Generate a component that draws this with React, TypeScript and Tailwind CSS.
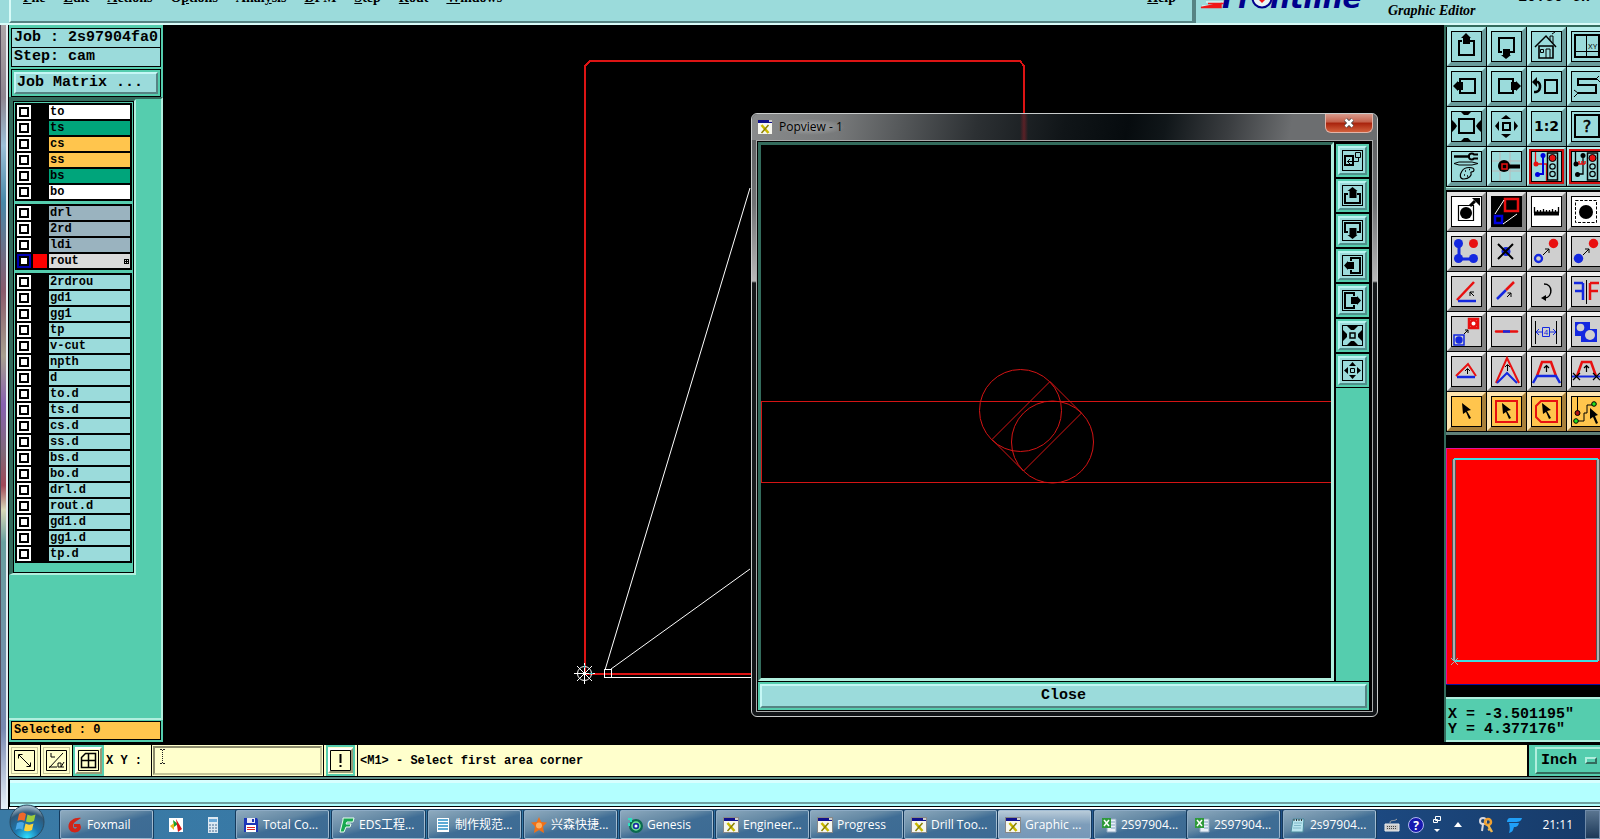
import React, { useState } from 'react';

type Layer = { name: string; bg: string; active?: boolean };

const layerGroups: Layer[][] = [
  [
    { name: 'to', bg: 'bg-white' },
    { name: 'ts', bg: 'bg-[#00a57b]' },
    { name: 'cs', bg: 'bg-[#ffc54d]' },
    { name: 'ss', bg: 'bg-[#ffc54d]' },
    { name: 'bs', bg: 'bg-[#00a57b]' },
    { name: 'bo', bg: 'bg-white' },
  ],
  [
    { name: 'drl', bg: 'bg-[#9ab3bf]' },
    { name: '2rd', bg: 'bg-[#9ab3bf]' },
    { name: 'ldi', bg: 'bg-[#9ab3bf]' },
    { name: 'rout', bg: 'bg-[#dadada]', active: true },
  ],
  [
    '2rdrou', 'gd1', 'gg1', 'tp', 'v-cut', 'npth', 'd', 'to.d', 'ts.d', 'cs.d', 'ss.d',
    'bs.d', 'bo.d', 'drl.d', 'rout.d', 'gd1.d', 'gg1.d', 'tp.d',
  ].map((name) => ({ name, bg: 'bg-[#9bdbdb]' })),
];

const menus = [
  ['', 'F', 'ile'],
  ['', 'E', 'dit'],
  ['', 'A', 'ctions'],
  ['O', 'p', 'tions'],
  ['Anal', 'y', 'sis'],
  ['', 'D', 'FM'],
  ['', 'S', 'tep'],
  ['', 'R', 'out'],
  ['', 'W', 'indows'],
];

const RED = '#e81010';
const BLUE = '#1428e0';

/* ---------- icons, all on a 31px box ---------- */

function Box({ children, fill = 'none' }: { children?: React.ReactNode; fill?: string }) {
  return (
    <svg viewBox="0 0 31 31" className="block size-[31px]" fill="none" stroke="#000" strokeWidth="2" aria-hidden="true">
      <rect x="0.5" y="0.5" width="30" height="30" fill={fill} strokeWidth="1" />
      {children}
    </svg>
  );
}

const icons: Record<string, React.ReactNode> = {
  panUp: <Box><path d="M11 10H8v14h15V10h-4" /><path d="M15 2l5 5h-1v6h-7V7h-2z" fill="#000" stroke="none" /></Box>,
  panDown: <Box><path d="M11 21H8V7h15v14h-4" /><path d="M15 28l5-4h-1v-6h-7v6h-2z" fill="#000" stroke="none" /></Box>,
  home: (
    <Box>
      <path d="M4 16L15 5l10 11" strokeWidth="1.5" /><path d="M8 15v12h14V15z" strokeWidth="1.6" />
      <path d="M9.5 18.500h3v3h-3zM15 27v-9h4v9M19 9V5h3v7M21 3l3-2" strokeWidth="1" />
    </Box>
  ),
  xy: (
    <Box>
      <path d="M4 4h24v22H4z" /><path d="M15.500 4v22M4 20.500h24" strokeWidth="1" />
      <text x="17" y="18" fontSize="7" fontFamily="Liberation Sans" fill="#000" stroke="none">XY</text>
    </Box>
  ),
  panLeft: <Box><path d="M9 11V8h15v14H9v-3" /><path d="M2 15l5-5v1h5v8H7v1z" fill="#000" stroke="none" /></Box>,
  panRight: <Box><path d="M22 11V8H8v14h14v-3" /><path d="M30 15l-5-5v1h-5v8h5v1z" fill="#000" stroke="none" /></Box>,
  undo: (
    <Box>
      <path d="M14 9h12v13H14z" /><path d="M4 11h3c3 2 3 9-2 10H3" strokeWidth="2.500" />
      <path d="M1 11l5-5v10z" fill="#000" stroke="none" />
    </Box>
  ),
  serpent: <Box><path d="M26 8H7v6h18v8H7" /><path d="M25 8l3-3M26 8l3 3M7 22l-4-3M7 22l-4 4" strokeWidth="1" /></Box>,
  zoomIn: (
    <Box>
      <path d="M8 8h15v14H8z" />
      <path d="M10 1h10l-3 3h-4zM10 30h10l-3-3h-4zM1 9l3 3 2 3-2 3-3 3zM30 9l-3 3-2 3 2 3 3 3z" fill="#000" stroke="none" />
    </Box>
  ),
  zoomOut: (
    <Box>
      <path d="M12 12h7v7h-7z" />
      <path d="M10 8h10l-5-4zM10 23h10l-5 4zM8 10v10l-4-5zM23 10v10l4-5z" fill="#000" stroke="none" />
    </Box>
  ),
  half: (
    <Box>
      <text x="15.500" y="20" textAnchor="middle" fontSize="14" fontWeight="700" fontFamily="DejaVu Sans" letterSpacing="0" fill="#000" stroke="none">1:2</text>
    </Box>
  ),
  help: (
    <Box>
      <path d="M4 4h24v22H4z" />
      <text x="16" y="21" textAnchor="middle" fontSize="16" fontFamily="DejaVu Sans" fill="#000" stroke="#000" strokeWidth="0.5">?</text>
    </Box>
  ),
  tools: (
    <Box>
      <path d="M3 5.500h16" strokeWidth="2.500" /><path d="M27 3.500h-4a3 3 0 1 0 0 4h4" />
      <path d="M3 12.500l5-1.500h13l6 1.500-6 1.500H8z" strokeWidth="1" />
      <path d="M11 20c3-5 12-4 12-1s-4 1-3 3-2 6-7 6-4-5-2-8z" strokeWidth="1.200" />
      <path d="M14 20h1M18 18.500h1M13 24h1M16 25h1" strokeWidth="1.500" />
    </Box>
  ),
  probe: (
    <Box>
      <path d="M9 1v29M19 1v29M1 10h29M1 20h29" stroke="#b9b9b9" strokeWidth="1" />
      <path d="M18 15.500h11" strokeWidth="4" />
      <circle cx="13" cy="15" r="6" fill="#000" stroke="none" />
      <path d="M11 13h5v5h-5z" stroke={RED} strokeWidth="1.500" />
    </Box>
  ),
  netColor: (
    <Box>
      <path d="M4.500 1v12h11v17" stroke={RED} strokeWidth="1.300" /><path d="M12 5v18H7" stroke="#0000e0" />
      <circle cx="5" cy="13" r="2.500" fill={RED} stroke="none" />
      <circle cx="12" cy="4.500" r="2.500" fill="#0000e0" stroke="none" /><circle cx="6.500" cy="23.500" r="2.500" fill="#0000e0" stroke="none" />
      <path d="M16.500 2h10v27h-10z" strokeWidth="1.500" />
      <circle cx="21.500" cy="7" r="3.500" fill={RED} strokeWidth="1" /><circle cx="21.500" cy="15.500" r="2.700" strokeWidth="1.200" /><circle cx="21.500" cy="23" r="2.700" strokeWidth="1.200" />
    </Box>
  ),
  netBlack: (
    <Box>
      <path d="M4.500 1v12M12 5v18H7" strokeWidth="1.300" /><path d="M6 13h8M8 10v3M11 10v3M14 10v3" stroke={RED} strokeWidth="1.500" />
      <circle cx="5" cy="13" r="2.500" fill="#000" stroke="none" />
      <circle cx="12" cy="4.500" r="2.500" fill="#000" stroke="none" /><circle cx="6.500" cy="23.500" r="2.500" fill="#000" stroke="none" />
      <path d="M16.500 2h10v27h-10z" strokeWidth="1.500" />
      <circle cx="21.500" cy="7" r="3.500" fill={RED} strokeWidth="1" /><circle cx="21.500" cy="15.500" r="2.700" strokeWidth="1.200" /><circle cx="21.500" cy="23" r="2.700" strokeWidth="1.200" />
    </Box>
  ),
  pad: (
    <Box fill="#fff">
      <path d="M7.500 9.500h15v15h-15z" strokeWidth="1.200" /><circle cx="15" cy="17" r="6" fill="#000" stroke="none" />
      <path d="M19 10l5-5" strokeWidth="3" /><path d="M21 2h8v8z" fill="#000" stroke="none" />
    </Box>
  ),
  window: (
    <Box fill="#000">
      <path d="M14 3h13v12H14z" stroke={RED} strokeWidth="2.500" /><path d="M4 20h7v7H4z" stroke="#0000e0" strokeWidth="2.500" />
      <path d="M4 18L13 4M12 28l14-10" stroke="#fff" strokeWidth="1" />
    </Box>
  ),
  ruler: <Box fill="#fff"><path d="M3 17.500h25" strokeWidth="4" /><path d="M3.500 11v6M6.500 14v3M9.500 14v3M12.500 13v4M15.500 14v3M18.500 14v3M21.500 13v4M24.500 14v3M27.500 11v6" strokeWidth="1.300" /></Box>,
  dotted: <Box fill="#fff"><path d="M4.500 4.500h21v22h-21z" strokeWidth="1" strokeDasharray="3 1.500" /><circle cx="15" cy="16" r="7" fill="#000" stroke="none" /></Box>,
  chain: (
    <Box>
      <path d="M8 8v15h15" stroke={BLUE} strokeWidth="3" />
      <g stroke="none"><circle cx="7.500" cy="7.500" r="4.500" fill={BLUE} /><circle cx="7.500" cy="22.500" r="4.500" fill={BLUE} /><circle cx="22.500" cy="22.500" r="4.500" fill={BLUE} /><circle cx="22.500" cy="7.500" r="4.500" fill={RED} /></g>
    </Box>
  ),
  erase: <Box><circle cx="15" cy="15.500" r="4.500" fill={BLUE} stroke="none" /><path d="M7 8l15 15M22 8L7 23" /></Box>,
  copy: <Box><circle cx="7.500" cy="22.500" r="3.500" stroke={BLUE} strokeWidth="2.300" /><circle cx="22.500" cy="7.500" r="4.700" fill={RED} stroke="none" /><path d="M12 19l6-6M14 13h4v4" strokeWidth="1" /></Box>,
  move: <Box><circle cx="7.500" cy="22.500" r="4.700" fill={BLUE} stroke="none" /><circle cx="22.500" cy="7.500" r="4.700" fill={RED} stroke="none" /><path d="M12 19l6-6M14 13h4v4" strokeWidth="1" /></Box>,
  angle: <Box><path d="M6 24L23 6" stroke={RED} strokeWidth="2.500" /><path d="M7 25h18" stroke={BLUE} strokeWidth="2.500" /><path d="M23 20l-4-4M19 20v-4h4" strokeWidth="1" /></Box>,
  slide: <Box><path d="M6 23l9-9" stroke={BLUE} strokeWidth="2.500" /><path d="M15 14l8-8" stroke={RED} strokeWidth="2.500" /><path d="M16 21l4-4M16.500 17H20v4" strokeWidth="1" /></Box>,
  rotate: <Box><path d="M13 8c9 0 9 13 1 14" strokeWidth="1.500" /><path d="M10 22l5-3v6z" fill="#000" stroke="none" /></Box>,
  mirror: (
    <Box>
      <path d="M12 7H3M12 7v17M12 15H4" stroke={BLUE} strokeWidth="2.500" /><path d="M15.500 4v24" strokeWidth="1" />
      <path d="M19 7h9M19 7v17M19 15h8" stroke={RED} strokeWidth="2.500" />
    </Box>
  ),
  swap: (
    <Box>
      <path d="M18 3h9v9h-9z" stroke={RED} strokeWidth="2.500" /><circle cx="22.500" cy="7.500" r="3" fill="#fff" stroke={RED} />
      <path d="M3 19h10v10H3z" stroke={BLUE} strokeWidth="1.500" /><circle cx="8" cy="24" r="3.700" fill={BLUE} stroke="none" />
      <path d="M13 18l4-4M14 14h3v3" strokeWidth="1" />
    </Box>
  ),
  join: <Box><path d="M5 15.500h21" stroke={RED} strokeWidth="2.500" strokeLinecap="round" /><path d="M12 15.500h7" stroke={BLUE} strokeWidth="2.500" /></Box>,
  spacing: (
    <Box>
      <path d="M4.500 5v23M25.500 5v23" strokeWidth="1" /><path d="M11.500 11.500h7v9h-7z" stroke={BLUE} strokeWidth="1" />
      <path d="M5 16h6M19 16h6M8 13l-3 3 3 3M22 13l3 3-3 3" stroke={BLUE} strokeWidth="1" />
      <text x="15" y="19" textAnchor="middle" fontSize="8" fontFamily="Liberation Sans" fill={BLUE} stroke="none">4</text>
    </Box>
  ),
  surface: (
    <Box>
      <path d="M4 6h15v7h7v13H10v-6H4z" fill={BLUE} stroke="none" />
      <circle cx="9.500" cy="11.500" r="3.800" fill="#cfcfcf" stroke="none" /><circle cx="19" cy="19" r="5" fill="#cfcfcf" stroke="none" />
    </Box>
  ),
  tri1: <Box><path d="M5 20L17 8l8 12" stroke={RED} /><path d="M6 21h18" stroke={BLUE} strokeWidth="2.500" /><path d="M16.500 18v-5M14 15l2.500-2.500L19 15" strokeWidth="1" /></Box>,
  tri2: <Box><path d="M5 27L16 2l12 25" stroke={RED} /><path d="M6 27l10-10 10 10" stroke={BLUE} /><path d="M16.500 15V9M14 11l2.500-2.500L19 11" strokeWidth="1" /></Box>,
  tri3: <Box><path d="M6 20l5-14h9l5 14" stroke={RED} strokeWidth="2.500" /><path d="M2 27l4-7h19l4 7" stroke={BLUE} strokeWidth="2.500" /><path d="M15.500 16v-6M13 12l2.500-2.500L18 12" strokeWidth="1.200" /></Box>,
  tri4: <Box><path d="M6 20l5-14h9l5 14" stroke={RED} strokeWidth="2.500" /><path d="M1 20.500h29" stroke={BLUE} /><path d="M2 17l7 7M9 17l-7 7M22 17l7 7M29 17l-7 7M15.500 16v-6M13 12l2.500-2.500L18 12" strokeWidth="1.200" /></Box>,
  arrow: <Box><path d="M11 7l9 7-4 1 4 7-2 1-3-7-3 2z" fill="#000" stroke="none" /></Box>,
  arrowRect: <Box><path d="M5 5h21v21H5z" stroke={RED} /><path d="M11 7l9 7-4 1 4 7-2 1-3-7-3 2z" fill="#000" stroke="none" /></Box>,
  arrowPoly: <Box><path d="M10 5h16v21H10l-5-5V10z" stroke={RED} /><path d="M11 7l9 7-4 1 4 7-2 1-3-7-3 2z" fill="#000" stroke="none" /></Box>,
  arrowNet: (
    <Box>
      <path d="M6.500 1v15M6 25h7v-8h3V9h7" strokeWidth="1" />
      <circle cx="6.500" cy="17" r="2.500" fill="#b01010" strokeWidth="1" /><circle cx="5" cy="25" r="2.300" fill="#20e020" strokeWidth="1" /><circle cx="23" cy="8" r="2.300" fill="#20e020" strokeWidth="1" />
      <path d="M19 12l8 7-3 1 3 7-2 1-3-7-3 2z" fill="#000" stroke="none" />
    </Box>
  ),
};

const bevel = {
  aqua: 'bg-[#9bdbdb] border-t-[#b8efed] border-l-[#b8efed] border-r-[#6a9c9c] border-b-[#6a9c9c]',
  white: 'bg-white border-t-[#e2e2e2] border-l-[#e2e2e2] border-r-[#858585] border-b-[#858585]',
  gray: 'bg-[#cfcfcf] border-t-[#efefef] border-l-[#efefef] border-r-[#858585] border-b-[#858585]',
  orange: 'bg-[#ffc54d] border-t-[#ffe5b0] border-l-[#ffe5b0] border-r-[#a8803a] border-b-[#a8803a]',
};

type Tone = keyof typeof bevel;

const viewTools = [
  'panUp', 'panDown', 'home', 'xy', 'panLeft', 'panRight', 'undo', 'serpent',
  'zoomIn', 'zoomOut', 'half', 'help', 'tools', 'probe', 'netColor', 'netBlack',
];

const editTools: [string, Tone][] = [
  ['pad', 'white'], ['window', 'white'], ['ruler', 'white'], ['dotted', 'white'],
  ['chain', 'gray'], ['erase', 'gray'], ['copy', 'gray'], ['move', 'gray'],
  ['angle', 'gray'], ['slide', 'gray'], ['rotate', 'gray'], ['mirror', 'gray'],
  ['swap', 'gray'], ['join', 'gray'], ['spacing', 'gray'], ['surface', 'gray'],
  ['tri1', 'gray'], ['tri2', 'gray'], ['tri3', 'gray'], ['tri4', 'gray'],
  ['arrow', 'orange'], ['arrowRect', 'orange'], ['arrowPoly', 'orange'], ['arrowNet', 'orange'],
];

function ToolButton({ icon, tone = 'aqua' }: { icon: string; tone?: Tone }) {
  const alert = icon.startsWith('net');
  return (
    <button type="button" aria-label={icon} className={`flex size-[39px] items-center justify-center border-4 ${bevel[tone]}`}>
      <span className={alert ? 'outline-2 outline-[#d01010]' : ''}>{icons[icon]}</span>
    </button>
  );
}

/* ---------- popview icons, 21px box ---------- */

const popIcons: [string, React.ReactNode][] = [
  ['Zoom area', <g key="a"><path d="M3 6h8v9H3z" strokeWidth="2" /><path d="M13.500 2.500h5v5h-5zM16.500 7v4.500H5M8 9l-2.500 2.500L8 14" /></g>],
  ['Pan up', <g key="b"><path d="M6 9H3v9h15V9h-3" strokeWidth="2" /><path d="M10.500 2l5 4h-1v7h-7V6h-2z" fill="#000" stroke="none" /></g>],
  ['Pan down', <g key="c"><path d="M6 12H3V3h15v9h-3" strokeWidth="2" /><path d="M10.500 19l5-4h-1V8h-7v7h-2z" fill="#000" stroke="none" /></g>],
  ['Pan left', <g key="d"><path d="M9 6V3h9v15H9v-3" strokeWidth="2" /><path d="M2 10.500l4-4.500v1h6v7H6v1z" fill="#000" stroke="none" /></g>],
  ['Pan right', <g key="e"><path d="M12 6V3H3v15h9v-3" strokeWidth="2" /><path d="M19 10.500L15 6v1H9v7h6v1z" fill="#000" stroke="none" /></g>],
  ['Zoom in', <g key="f"><path d="M8 8h5v5H8z" strokeWidth="1.500" /><path d="M5 1h11l-4 4H9zM5 20h11l-4-4H9zM1 5l4 4v3l-4 4zM20 5l-4 4v3l4 4z" fill="#000" stroke="none" /></g>],
  ['Zoom out', <g key="g"><path d="M8.500 8.500h4v4h-4z" /><path d="M7 6h7l-3.500-4zM7 15h7l-3.500 4zM6 7v7l-4-3.500zM15 7v7l4-3.500z" fill="#000" stroke="none" /></g>],
];

function XIcon() {
  return (
    <svg viewBox="0 0 16 16" className="size-4 shrink-0" aria-hidden="true">
      <rect x="0.5" y="0.5" width="15" height="15" fill="#f6f6ee" stroke="#888" />
      <rect x="1" y="1" width="14" height="3" fill="#10108c" />
      <path d="M12 1h3v2h-3z" fill="#ccc" />
      <path d="M4.500 6l7 8" stroke="#c9b800" strokeWidth="2.500" />
      <path d="M11.500 6l-7 8" stroke="#8a8000" strokeWidth="1.500" />
    </svg>
  );
}

function Popview() {
  return (
    <section className="absolute top-[113px] left-[751px] flex h-[604px] w-[627px] flex-col rounded-md border border-[#c9cccc] bg-[linear-gradient(180deg,#5a5c5e_0px,#707274_90px,#b8b8b8_167px,#15181a_169px,#111417_100%)] px-1 pb-1">
      <header className="relative -mx-1 flex h-[26px] items-start justify-between rounded-t-md bg-[linear-gradient(100deg,#8a8c8d_0%,#77797a_14%,#55585a_24%,#2c3033_36%,#101518_50%,#060b0e_60%,#101619_66%,#3a3d40_76%,#6c6e70_86%,#6c6e70_100%)] pl-[5px]">
        <span className="absolute top-0 left-[268px] h-full w-2 bg-[linear-gradient(90deg,transparent,#8c202890,transparent)]" />
        <div className="flex h-full items-center gap-1 font-['Open_Sans',sans-serif] text-xs text-black">
          <XIcon />
          <h2 className="bg-[radial-gradient(closest-side,#a8aaab,transparent)] px-0.5">Popview - 1</h2>
        </div>
        <button type="button" aria-label="Close window" className="mr-1 flex h-[19px] w-12 items-center justify-center rounded-b-md border border-t-0 border-[#e3b4a8] bg-[linear-gradient(180deg,#d89a8c_0%,#c4604a_45%,#a8220c_50%,#d2603c_100%)]">
          <svg viewBox="0 0 12 12" className="size-3" aria-hidden="true">
            <path d="M2.500 2.500l7 7M9.500 2.500l-7 7" stroke="#444" strokeWidth="4" /><path d="M2.500 2.500l7 7M9.500 2.500l-7 7" stroke="#fff" strokeWidth="2.500" />
          </svg>
        </button>
      </header>
      <div className="flex min-h-0 flex-1 flex-col border border-[#a9acac] bg-black py-px pr-[3px] pl-px">
        <div className="flex min-h-0 flex-1 gap-0.5">
          <div className="min-w-0 flex-1 overflow-hidden border-3 border-t-[#336b5c] border-r-[#b0efde] border-b-[#b0efde] border-l-[#336b5c]">
            <svg width="570" height="533" viewBox="761 145 570 533" fill="none" stroke="#d41414" shapeRendering="crispEdges" aria-label="Popview drawing">
              <path d="M1335 401.500H761.500v81H1335" />
              <g shapeRendering="auto">
                <circle cx="1020.500" cy="410.500" r="41" /><circle cx="1052.500" cy="442" r="41" />
                <path d="M1050 381.500L992 439.500M1081.500 413L1023.500 471M1050 381.500l31.500 31.500M992 439.500l31.500 31.500" />
              </g>
            </svg>
          </div>
          <div className="w-[33px] bg-[#55cdae]">
            <div className="flex flex-col bg-black pt-px">
              {popIcons.map(([label, icon]) => (
                <button key={label} type="button" aria-label={label} className="mt-px mb-px flex h-[33px] items-center justify-center bg-[#55cdae]">
                  <span className="border-2 border-t-[#b8f4f0] border-r-[#4f8f8a] border-b-[#4f8f8a] border-l-[#b8f4f0] bg-[#9bdbdb] p-0.5">
                    <svg viewBox="0 0 21 21" className="size-[21px]" fill="none" stroke="#000" strokeWidth="1">
                      <rect x="0.5" y="0.5" width="20" height="20" />
                      {icon}
                    </svg>
                  </span>
                </button>
              ))}
            </div>
          </div>
        </div>
        <button type="button" className="mt-px h-7 border-2 border-[#55cdae] bg-[#9bdbdb] font-['Liberation_Mono',monospace] text-[15px] leading-5 font-semibold text-black">
          <span className="flex h-6 items-center justify-center border-2 border-t-[#c5f7f5] border-r-[#568383] border-b-[#568383] border-l-[#c5f7f5]">Close</span>
        </button>
      </div>
    </section>
  );
}

function MenuBar() {
  return (
    <header className="flex h-[25px] shrink-0 overflow-hidden border-b-2 border-[#d8fbf8] bg-[#9bdbdb] pl-[9px] text-black">
      <nav className="flex min-w-0 flex-1 border-r-2 border-b-2 border-l-2 border-[#568383] border-l-[#d8fbf8] pr-4 pl-3 font-['Liberation_Serif',serif] text-sm leading-4 font-bold">
        <div className="-mt-2.5 flex flex-1 gap-[18px]">
          {menus.map(([before, key, after]) => (
            <a key={before + key + after} href="#menu">
              {before}<u>{key}</u>{after}
            </a>
          ))}
          <a href="#help" className="ml-auto"><u>H</u>elp</a>
        </div>
      </nav>
      <div className="flex w-[406px] border-l-2 border-[#568383]">
        <svg viewBox="0 0 170 23" className="h-[23px] w-[170px]" aria-label="Frontline">
          <path d="M10 2h18M6 6h20" stroke="#fff" strokeWidth="1" />
          <path d="M12 3.500h18M5 7.500l20-4v4z" stroke="#f01818" fill="#f01818" strokeWidth="1.500" />
          <g fontFamily="DejaVu Sans" fontWeight="700" fontStyle="oblique" fontSize="28" fill="#00008c">
            <text x="26" y="8">Fr</text>
            <text x="74" y="8">ntline</text>
          </g>
          <circle cx="66" cy="-2" r="9.500" fill="#e8f4f4" stroke="#00008c" strokeWidth="2" />
          <path d="M61 -2h10l-5 5z" fill="#f01818" />
        </svg>
        <p className="mt-[3px] pl-[22px] font-['Liberation_Serif',serif] text-sm leading-4 font-bold whitespace-nowrap italic">Graphic Editor</p>
        <p className="-mt-2.5 ml-auto pr-2.5 font-['Liberation_Mono',monospace] text-[15px] leading-4 font-bold">10:50 GH</p>
      </div>
    </header>
  );
}

function Sidebar() {
  const [selected] = useState(0);
  return (
    <aside className="mb-[3px] ml-2 flex w-[155px] shrink-0 flex-col border-l border-black bg-[#55cdae] text-black">
      <div className="px-0.5 pt-[3px] font-['Liberation_Mono',monospace] text-[15px] leading-[18px] font-semibold whitespace-nowrap">
        <div className="overflow-hidden border border-black bg-[#9bdbdb] pl-0.5">Job : 2s97904fa0</div>
        <div className="border border-t-0 border-black bg-[#9bdbdb] pl-0.5">Step: cam</div>
        <div className="mt-0.5 border border-black p-0.5">
          <button type="button" className="block w-full border-2 border-t-[#c5f7f5] border-r-[#568383] border-b-[#568383] border-l-[#c5f7f5] bg-[#9bdbdb] pl-px text-left">Job Matrix ...</button>
        </div>
      </div>
      <div className="flex min-h-0 flex-1 items-start border-t-2 border-r-2 border-b-2 border-t-[#336b5c] border-r-[#b0efde] border-b-[#b0efde]">
        <div className="w-[127px] border-t-2 border-r-2 border-b-2 border-l-4 border-t-[#336b5c] border-r-[#b0efde] border-b-[#b0efde] border-l-[#336b5c]">
          <div className="flex flex-col gap-[3px] border border-black px-px pt-px pb-[9px]">
            {layerGroups.map((group, i) => (
              <div key={i} className="bg-black p-px">
                {group.map((l) => (
                  <label key={l.name} className="flex h-4 items-center gap-0.5 px-px font-['Liberation_Mono',monospace] text-xs leading-[14px] font-bold">
                    <input
                      type="checkbox"
                      defaultChecked={l.active}
                      className="size-[14px] shrink-0 appearance-none border-2 border-white bg-white shadow-[inset_0_0_0_2px_black] checked:border-[#0000b4]"
                    />
                    <span className={`size-[14px] shrink-0 ${l.active ? 'bg-[#ff0000]' : 'bg-black'}`} />
                    <span className={`flex h-[14px] min-w-0 flex-1 items-center justify-between pl-px ${l.bg}`}>
                      {l.name}
                      {l.active && (
                        <svg viewBox="0 0 5 5" className="mr-px size-[5px]" shapeRendering="crispEdges" aria-hidden="true">
                          <path d="M.5.5h4v4h-4zM2.500.5v4M.5 2.500h4" fill="none" stroke="#000" />
                        </svg>
                      )}
                    </span>
                  </label>
                ))}
              </div>
            ))}
          </div>
        </div>
      </div>
      <div className="px-0.5 pt-px pb-0.5">
        <p className="border border-black bg-[#ffc54d] pl-0.5 font-['Liberation_Mono',monospace] text-xs leading-[17px] font-bold">Selected : {selected}</p>
      </div>
    </aside>
  );
}

function Workspace() {
  return (
    <main className="min-w-0 flex-1 overflow-hidden bg-black">
      <svg width="1281" height="720" viewBox="163 25 1281 720" fill="none" aria-label="Board drawing">
        <path d="M585 674V66l5-5h430l4 5v608z" stroke="#dc1414" strokeWidth="2" shapeRendering="crispEdges" />
        <path d="M750 188L605 670M750 569L611 669" stroke="#fff" />
        <path d="M604.500 669.500h7v8h-7zM612 677.500h140" stroke="#fff" shapeRendering="crispEdges" />
        <path d="M584.500 663v21M574 673.500h21M577 666l15 15M592 666l-15 15" stroke="#fff" />
        <circle cx="584.500" cy="673.500" r="7" stroke="#fff" />
        <path d="M589 673.500h4M584.500 665v3" stroke="#40d0d0" />
      </svg>
    </main>
  );
}

function RightPanel() {
  return (
    <aside className="mb-[3px] flex w-[156px] shrink-0 flex-col overflow-hidden border-l-2 border-[#336b5c] bg-black">
      <div className="grid grid-cols-[repeat(4,39px)] gap-px border-t-2 border-[#336b5c] pl-px">
        {viewTools.map((icon) => <ToolButton key={icon} icon={icon} />)}
      </div>
      <div className="mt-px mb-0.5 h-[3px] border-t border-[#b0efde] bg-[#6fa79f]" />
      <div className="grid grid-cols-[repeat(4,39px)] gap-px pl-px">
        {editTools.map(([icon, tone]) => <ToolButton key={icon} icon={icon} tone={tone} />)}
      </div>
      <div className="mt-px h-[3px] bg-[#5f8078]" />
      <div className="flex flex-1 flex-col justify-center">
        <svg width="160" height="237" viewBox="1446 448 160 237" className="shrink-0" fill="none" shapeRendering="crispEdges" aria-label="Overview">
          <path d="M1446 448h160v237h-160z" fill="#ff0000" />
          <path d="M1446.500 684V448.500H1606" stroke="#e010a0" />
          <path d="M1446 684.500h160" stroke="#1010a0" />
          <path d="M1454 459v202M1598 459v202" stroke="#555" strokeWidth="4" />
          <path d="M1454 459v202M1598 459v202" stroke="#b0b0b0" strokeWidth="2" />
          <path d="M1454 459h144M1454 661h144" stroke="#40dce0" strokeWidth="2" />
          <path d="M1451 658l7 7M1458 658l-7 7" stroke="#b0b0b0" />
        </svg>
      </div>
      <div className="h-[45px] border-t-2 border-b-2 border-[#b0efde] bg-[#55cdae] pt-2 pl-0.5 font-['Liberation_Mono',monospace] text-[15px] leading-[15px] font-semibold whitespace-pre text-black">
        <p>X = -3.501195&quot;</p>
        <p>Y = 4.377176&quot;</p>
      </div>
    </aside>
  );
}

function PromptBar() {
  return (
    <div className="ml-[9px] flex h-8 shrink-0 border-b border-black bg-[#ffffcc] font-['Liberation_Mono',monospace] text-xs font-bold text-black">
      <button type="button" aria-label="Snap line" className="flex w-8 items-center justify-center border-r border-black">
        <span className="border border-[#c5c59a] p-0.5">
          <svg viewBox="0 0 21 21" className="size-[21px]" fill="none" stroke="#000"><path d="M.5.5h20v20H.5zM5 5l11 11M4.500 8.500v-4h4M16.500 12.500v4h-4" /></svg>
        </span>
      </button>
      <button type="button" aria-label="Snap angle" className="flex w-8 items-center justify-center border-r border-black">
        <span className="border border-[#c5c59a] p-0.5">
          <svg viewBox="0 0 21 21" className="size-[21px]" fill="none" stroke="#000"><path d="M.5.5h20v20H.5zM3 18L17 3M3 17h8M5 3v4h4M12 13h3v4h-3zM18 12l-3 5h3" /></svg>
        </span>
      </button>
      <button type="button" aria-label="Grid" className="flex w-[30px] items-center justify-center border-2 border-[#55cdae]">
        <span className="border-2 border-t-white border-r-[#9a9a78] border-b-[#9a9a78] border-l-white p-px">
          <svg viewBox="0 0 21 21" className="size-[21px]" fill="none" stroke="#000"><path d="M.5.5h20v20H.5z" /><path d="M3.500 17.500v-10l4-4h10v14zM10.500 3v14M3 10.500h14" strokeWidth="1.500" /></svg>
        </span>
      </button>
      <label htmlFor="xy" className="flex w-12 items-center border-l border-[#55cdae] pl-0.5 whitespace-pre">X Y :</label>
      <div className="relative flex w-[173px] border-x border-black p-px">
        <input id="xy" className="w-full border-2 border-t-[#8c8c6c] border-r-[#c5c59a] border-b-[#c5c59a] border-l-[#8c8c6c] bg-[#ffffcc] px-1 outline-none" />
        <svg viewBox="0 0 5 15" className="pointer-events-none absolute top-1 left-2 h-[15px] w-[5px]" fill="none" stroke="#222" shapeRendering="crispEdges" aria-hidden="true">
          <path d="M0 .5h2M3 .5h2M0 14.500h2M3 14.500h2" /><path d="M2.500 1v13" strokeDasharray="1 1" />
        </svg>
      </div>
      <button type="button" aria-label="Apply" className="mx-0.5 flex w-[29px] items-center justify-center border-2 border-[#55cdae]">
        <span className="border-2 border-t-white border-r-[#9a9a78] border-b-[#9a9a78] border-l-white">
          <svg viewBox="0 0 21 21" className="size-[21px]" fill="none" stroke="#000"><path d="M.5.5h20v20H.5z" /><path d="M10.500 4v9M10.500 15v2" strokeWidth="2" /></svg>
        </span>
      </button>
      <p className="flex flex-1 items-center border-l border-black pl-0.5">&lt;M1&gt; - Select first area corner</p>
      <label className="relative flex w-[73px] items-center border-l-2 border-black bg-[#55cdae] py-0.5 pl-1.5">
        <span className="sr-only">Units</span>
        <select className="h-full w-full appearance-none border-y-2 border-l-2 border-y-[#b0efde] border-b-[#336b5c] border-l-[#b0efde] bg-[#55cdae] pl-1 text-[15px] font-semibold outline-none">
          <option>Inch</option>
          <option>mm</option>
        </select>
        <span className="pointer-events-none absolute right-[3px] h-[7px] w-3 border-2 border-t-[#b0efde] border-r-[#336b5c] border-b-[#336b5c] border-l-[#b0efde]" />
      </label>
    </div>
  );
}

/* ---------- windows taskbar ---------- */

const foxmail = <svg viewBox="0 0 16 16" className="size-4"><path d="M14 1C8 0 1 4 1.500 10c.5 7 12 7.500 12.500 0L13 7H7v3h3c-1 3-4 2-4-1 0-4 4-5 8-8z" fill="#d22418" /></svg>;
const floppy = <svg viewBox="0 0 16 16" className="size-4"><path d="M1 1h13l1 2v12H1z" fill="#1c35b8" /><path d="M4 1h8v5H4z" fill="#e8e8f4" /><path d="M9 2h2v3H9z" fill="#1c35b8" /><path d="M3 8h10v7H3z" fill="#fff" /><path d="M4 10.500h8M4 12.500h8" stroke="#d22" /></svg>;
const eds = <svg viewBox="0 0 16 16" className="size-4"><path d="M4 1h11l-1 4H8l-1 2h5l-1 3H7l-2 5H1l3-12z" fill="#18a850" stroke="#e8fff0" strokeWidth="1" /></svg>;
const sheet = <svg viewBox="0 0 16 16" className="size-4"><path d="M2 1h12v14H2z" fill="#fff" /><path d="M3 3h10M3 6h10M3 9h10M3 12h10" stroke="#2a90c8" strokeWidth="1.500" /></svg>;
const star = <svg viewBox="0 0 16 16" className="size-4"><path d="M8 0l2.300 5 5.700.6-4 4 1 6.400-5-3-5 3 1-6.400-4-4L5.700 5z" fill="#f07018" /><circle cx="8" cy="8.500" r="3" fill="#ffb060" /></svg>;
const genesis = <svg viewBox="0 0 16 16" className="size-4"><circle cx="9" cy="9" r="7" fill="#0a6a50" /><circle cx="9" cy="9" r="4" fill="#1830a0" stroke="#70e890" strokeWidth="1.500" /><circle cx="9" cy="9" r="1.500" fill="#fff" /><path d="M1 2h3v3M2 6v3" stroke="#30e0c0" strokeWidth="2" fill="none" /></svg>;
const excel = <svg viewBox="0 0 16 16" className="size-4"><path d="M6 2h9v13H6z" fill="#e8f0f8" stroke="#90a8c0" /><path d="M10 5h4M10 8h4M10 11h4" stroke="#7fa0c0" /><path d="M1 1h9v10H1z" fill="#2f9a3a" /><path d="M3 3l5 6M8 3L3 9" stroke="#fff" strokeWidth="1.500" /></svg>;
const notepad = <svg viewBox="0 0 16 16" className="size-4"><path d="M3 2h11l-1 13H1z" fill="#b8e4ee" stroke="#4a8a9c" /><path d="M4 2v2M6.500 2v2M9 2v2M11.500 2v2" stroke="#333" /><path d="M4 6h8M4 8.500h7M3 11h8" stroke="#80b8c8" /></svg>;

function Task({ icon, label, active }: { icon: React.ReactNode; label: string; active?: boolean }) {
  return (
    <button
      type="button"
      className={`flex h-[29px] w-[93px] items-center gap-1 overflow-hidden rounded-xs border border-[#c2d6e699] pl-1.5 whitespace-nowrap shadow-[0_0_0_1px_#153a5c] ${
        active ? 'bg-[linear-gradient(180deg,#b8cbd9,#7d9dba_50%,#7698b8)]' : 'bg-[linear-gradient(165deg,#8eaabe_0%,#6388a4_40%,#3f6d95_55%,#3c6b94_100%)]'
      }`}
    >
      <span className="shrink-0">{icon}</span>
      <span>{label}</span>
    </button>
  );
}

function Taskbar() {
  return (
    <footer className="flex h-[30px] shrink-0 items-center border-t border-[#203f58] bg-[linear-gradient(90deg,#3a7aa5_0%,#3678a6_35%,#2c629a_60%,#1d4a82_85%,#163a68_100%)] pl-[9px] font-['Open_Sans','Noto_Sans_CJK_SC',sans-serif] text-xs text-white">
      <button type="button" aria-label="Start" className="z-10 -mt-1.5 mr-[15px] shrink-0">
        <svg viewBox="0 0 36 36" className="size-9">
          <defs>
            <radialGradient id="orb" cx="50%" cy="95%" r="90%"><stop offset="0" stopColor="#30e0ff" /><stop offset="0.4" stopColor="#1c78b0" /><stop offset="0.8" stopColor="#305878" /><stop offset="1" stopColor="#a0b8c8" /></radialGradient>
          </defs>
          <circle cx="18" cy="18" r="17" fill="url(#orb)" stroke="#2a4a60" />
          <path d="M10 10c3-2 5-2 7 0l-1.500 7c-2-1.500-5-1.500-7 0z" fill="#f0682a" /><path d="M18.500 10.500c2 1.500 5 1.500 8 0L25 17c-3 1.500-6 1.500-8 .5z" fill="#9ccc3c" />
          <path d="M8 19c3-1.500 5-1.500 7 0l-1.500 7c-2-2-4-1.500-7 0z" fill="#4aa8e8" /><path d="M16.500 19.500c2 1.500 5 1.500 8 0L23 26c-3 1.500-6 1.500-8 .5z" fill="#fcd23c" />
        </svg>
      </button>
      <Task icon={foxmail} label="Foxmail" />
      <div className="flex w-[83px] items-center justify-around px-1">
        <svg viewBox="0 0 16 16" className="size-4"><path d="M1 1h14v14H1z" fill="#fff" /><path d="M5 3l5 4-4 3z" fill="#18a030" /><path d="M8 2l6 10-4 3z" fill="#d81818" /><path d="M2 9l4-3v7z" fill="#e8b820" /></svg>
        <svg viewBox="0 0 16 16" className="size-4"><path d="M3 0h10v16H3z" fill="#dce8f2" /><path d="M4 2h8v3H4z" fill="#68a8d8" /><path d="M5 7v8M8 7v8M11 7v8" stroke="#8fa8c0" strokeWidth="2" strokeDasharray="2 1" /></svg>
      </div>
      <div className="flex gap-[3px]">
        <Task icon={floppy} label="Total Co..." />
        <Task icon={eds} label="EDS工程..." />
        <Task icon={sheet} label="制作规范..." />
        <Task icon={star} label="兴森快捷..." />
        <Task icon={genesis} label="Genesis" />
        <div className="flex gap-px">
          <Task icon={<XIcon />} label="Engineer..." />
          <Task icon={<XIcon />} label="Progress" />
          <Task icon={<XIcon />} label="Drill Too..." />
          <Task icon={<XIcon />} label="Graphic ..." active />
        </div>
        <div className="flex">
          <Task icon={excel} label="2S97904..." />
          <Task icon={excel} label="2S97904..." />
        </div>
        <Task icon={notepad} label="2s97904..." />
      </div>
      <div className="ml-auto flex h-full items-center gap-3">
        <svg viewBox="0 0 16 16" className="size-4" fill="none"><path d="M1 7h14v7H1z" fill="#c8c8c8" stroke="#eee" /><path d="M3 9.500h10M3 11.500h10" stroke="#444" strokeDasharray="1 1" /><path d="M6 6c0-4 4-1 7-4" stroke="#aaa" /></svg>
        <svg viewBox="0 0 16 16" className="-mx-1 size-4"><circle cx="8" cy="8" r="7.500" fill="#1818b0" stroke="#b0b8f0" /><text x="8" y="12.500" textAnchor="middle" fontSize="12" fontWeight="700" fill="#fff">?</text></svg>
        <svg viewBox="0 0 10 20" className="h-5 w-2.5" fill="none" stroke="#fff"><path d="M3.500 1.500h5v4h-5zM1.500 4.500h4v3h-4z" /><path d="M2 14h6l-3 3z" fill="#fff" stroke="none" /></svg>
        <svg viewBox="0 0 8 5" className="h-[5px] w-2"><path d="M0 5l4-5 4 5z" fill="#fff" /></svg>
        <svg viewBox="0 0 16 16" className="ml-1 size-4" fill="none"><circle cx="5" cy="4" r="3" stroke="#d8d8e0" strokeWidth="2" /><path d="M5 7l-1 7" stroke="#d8d8e0" strokeWidth="2" /><circle cx="10" cy="5" r="3" stroke="#f0a030" strokeWidth="2.500" /><path d="M10 8l4 7M12 12l-2 1" stroke="#f0b850" strokeWidth="2.500" /></svg>
        <svg viewBox="0 0 16 16" className="size-4"><path d="M4 1h12c-1 4-4 4-8 4H1c0-2 1-4 3-4zM3 6h10c-1 4-3 4-5 4-1 3-1 5-5 6 1-3 1-6 0-10z" fill="#20a0f8" /></svg>
        <time className="pl-2">21:11</time>
        <button type="button" aria-label="Show desktop" className="h-full w-[15px] border border-[#6f8aa8] bg-[linear-gradient(180deg,#5a7590,#1c3858)]" />
      </div>
    </footer>
  );
}

export default function App() {
  return (
    <div className="relative flex h-screen w-full flex-col overflow-hidden bg-black">
      <div className="flex min-h-0 flex-1 flex-col bg-[linear-gradient(90deg,#554c5c_0px,#554c5c_1px,transparent_1px,transparent_6px,#e8eef4_6px,#e8eef4_8px,#000_8px),linear-gradient(180deg,#b8b0b0_0%,#8e8590_12%,#9cc0d8_18%,#4888a8_25%,#8a5a6c_36%,#a8a090_44%,#8860b0_50%,#806878_56%,#a04858_60%,#d8d8b8_63%,#68a0a0_67%,#7888b0_90%,#e8f0f8_100%)]">
        <MenuBar />
        <div className="flex min-h-0 flex-1">
          <Sidebar />
          <Workspace />
          <RightPanel />
        </div>
        <PromptBar />
        <div className="ml-[9px] h-8 shrink-0 border-t-2 border-b-2 border-t-[#5f8f8a] border-b-white bg-black py-px pl-px">
          <div className="h-full border-b-2 border-[#b3ffff] bg-[#b3ffff]">
            <div className="h-full border-t-3 border-b-2 border-t-[#d8ffff] border-b-[#6ea0a0]" />
          </div>
        </div>
      </div>
      <Taskbar />
      <Popview />
    </div>
  );
}
